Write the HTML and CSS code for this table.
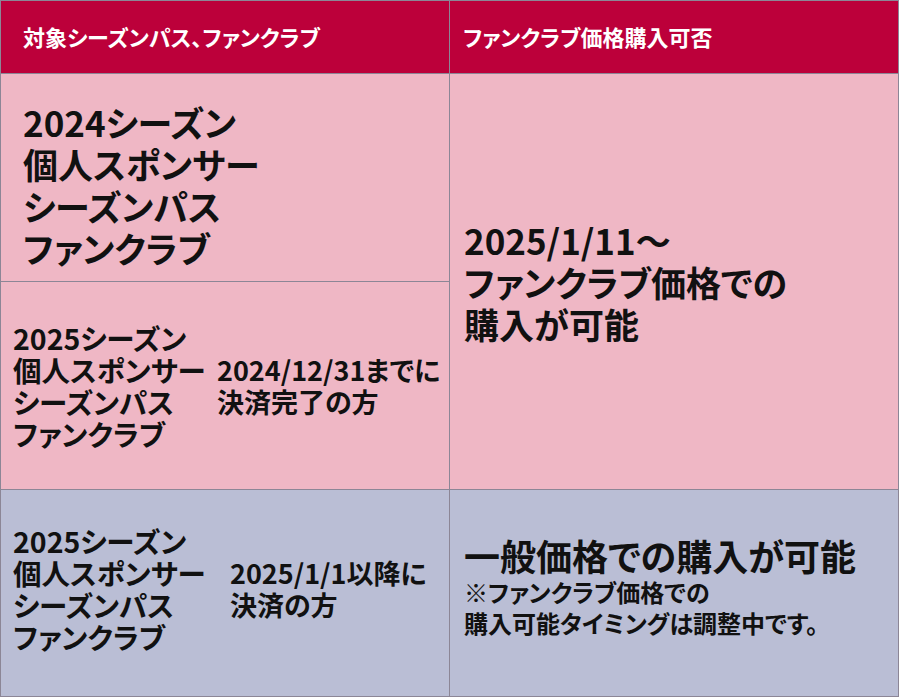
FILE: index.html
```html
<!DOCTYPE html>
<html lang="ja">
<head>
<meta charset="utf-8">
<title>ファンクラブ価格購入可否</title>
<link rel="stylesheet" href="styles.css">
</head>
<body>
<div class="table">
  <div class="head head-left">対象シーズンパス、ファンクラブ</div>
  <div class="head head-right">ファンクラブ価格購入可否</div>

  <div class="cell pink row1">
    <p class="big">2024シーズン<br>個人スポンサー<br>シーズンパス<br>ファンクラブ</p>
  </div>

  <div class="cell pink right-pink">
    <p class="big">2025/1/11〜<br>ファンクラブ価格での<br>購入が可能</p>
  </div>

  <div class="cell pink split split-a">
    <p class="mid">2025シーズン<br>個人スポンサー<br>シーズンパス<br>ファンクラブ</p>
    <p class="mid date">2024/12/31までに<br>決済完了の方</p>
  </div>

  <div class="cell lav split split-b">
    <p class="mid">2025シーズン<br>個人スポンサー<br>シーズンパス<br>ファンクラブ</p>
    <p class="mid date">2025/1/1以降に<br>決済の方</p>
  </div>

  <div class="cell lav right-lav">
    <p class="big general">一般価格での購入が可能</p>
    <p class="note">※ファンクラブ価格での<br>購入可能タイミングは調整中です。</p>
  </div>
</div>
</body>
</html>
```

FILE: styles.css
```css
html, body {
  margin: 0;
  padding: 0;
  background: #ffffff;
}

body {
  font-family: "Noto Sans CJK JP", "Noto Sans", sans-serif;
  font-feature-settings: "palt";
  color: #111111;
}

p {
  margin: 0;
}

.table {
  display: grid;
  width: 899px;
  height: 697px;
  box-sizing: border-box;
  border: 1px solid #8c8696;
  grid-template-columns: 448px 448px;
  grid-template-rows: 72px 207px 207px 206px;
  gap: 1px;
  background: #8c8696;
}

.head {
  background: #bc003a;
  color: #ffffff;
  font-size: 22px;
  font-weight: 700;
  display: flex;
  align-items: center;
  padding-bottom: 2px;
}

.head-left {
  padding-left: 22px;
}

.head-right {
  padding-left: 13px;
}

.cell {
  display: flex;
  align-items: center;
}

.pink {
  background: #efb7c5;
}

.lav {
  background: #babed5;
}

.big {
  font-size: 35px;
  font-weight: 700;
  line-height: 42px;
}

.big.general {
  font-size: 36px;
}

.mid {
  font-size: 28.5px;
  font-weight: 700;
  line-height: 32px;
}

.mid.date {
  font-size: 27px;
}

.note {
  font-size: 24px;
  font-weight: 700;
  line-height: 31px;
}

.row1 {
  grid-column: 1;
  grid-row: 2;
  padding-left: 22px;
  padding-top: 14px;
}

.right-pink {
  grid-column: 2;
  grid-row: 2 / span 2;
  padding-left: 14px;
}

.split {
  grid-column: 1;
  display: grid;
  align-items: center;
  padding-left: 12px;
}

.split-a {
  grid-row: 3;
  grid-template-columns: 204px auto;
}

.split-b {
  grid-row: 4;
  grid-template-columns: 217px auto;
  padding-bottom: 8px;
}

.right-lav {
  grid-column: 2;
  grid-row: 4;
  flex-direction: column;
  align-items: flex-start;
  justify-content: center;
  padding-left: 14px;
  padding-bottom: 14px;
}
```
